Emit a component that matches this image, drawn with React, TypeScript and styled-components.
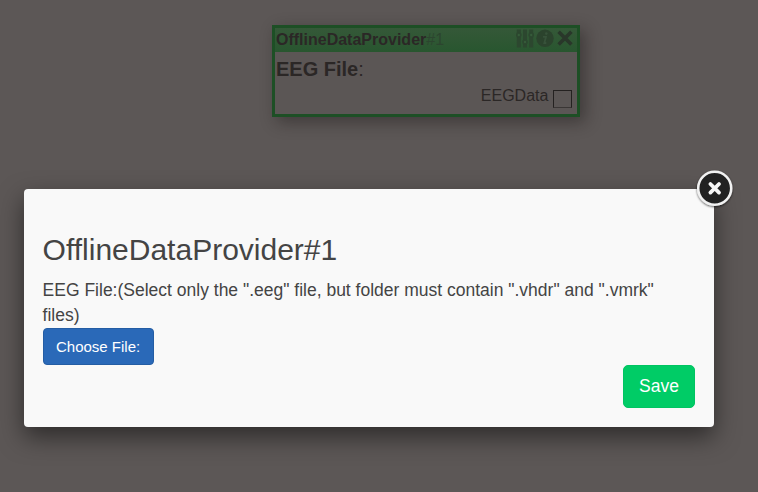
import React from "react";
import styled, { createGlobalStyle } from "styled-components";

const GlobalStyle = createGlobalStyle`
  * { box-sizing: border-box; }
  body {
    margin: 0;
    background: #5c5756;
    font-family: "Liberation Sans", Arial, sans-serif;
    overflow: hidden;
  }
  h2, p { margin: 0; font-weight: 400; }
  button { font-family: inherit; cursor: pointer; }
`;

const Page = styled.main`
  height: 492px;
  padding: 25px 0 0 24px;
  background: #5c5756;
`;

const Node = styled.section`
  width: 308px;
  height: 92px;
  margin-left: 248px;
  border: 3px solid #1d4f25;
  background: #5b5655;
  color: #2b2726;
  box-shadow: 5px 5px 15px rgba(20, 16, 14, 0.4);
`;

const NodeHeader = styled.header`
  display: flex;
  align-items: center;
  height: 24px;
  padding: 0 3px 0 1px;
  background: linear-gradient(#355838, #28562f);
  font-size: 16px;
  line-height: 24px;
`;

const NodeName = styled.span`
  font-weight: 700;
`;

const NodeIndex = styled.span`
  color: #2c452f;
`;

const NodeTools = styled.div`
  display: flex;
  gap: 2px;
  margin: -4px 0 0 auto;
`;

const Field = styled.div`
  padding-left: 1px;
  font-size: 20px;
  line-height: 34px;
`;

const Output = styled.div`
  display: flex;
  justify-content: flex-end;
  gap: 4.6px;
  padding-right: 5px;
  font-size: 16px;
  line-height: 20px;
`;

const Port = styled.span`
  width: 19px;
  height: 18px;
  margin-top: 4px;
  border: 1px solid #242120;
  border-bottom-color: #3a3635;
`;

const Dialog = styled.section`
  position: relative;
  display: flex;
  flex-direction: column;
  width: 690px;
  height: 238px;
  margin-top: 72px;
  padding: 42px 19px 19px 18.6px;
  border-radius: 4px;
  background: #f9f9f9;
  color: #444;
  box-shadow: 0 10px 25px rgba(0, 0, 0, 0.5);
`;

const Title = styled.h2`
  font-size: 30px;
  line-height: 38px;
`;

const Description = styled.p`
  margin-top: 9px;
  font-size: 17.5px;
  line-height: 25px;
`;

const Button = styled.button<{ $primary?: boolean }>`
  align-self: ${({ $primary }) => ($primary ? "flex-end" : "flex-start")};
  width: ${({ $primary }) => ($primary ? 72 : 111)}px;
  height: ${({ $primary }) => ($primary ? 43 : 37)}px;
  padding: 0;
  border: 1px solid ${({ $primary }) => ($primary ? "#00c462" : "#245da4")};
  border-radius: ${({ $primary }) => ($primary ? 5 : 4)}px;
  background: ${({ $primary }) => ($primary ? "#00cc66" : "#2a69b8")};
  color: #fff;
  font-size: ${({ $primary }) => ($primary ? 17.5 : 15)}px;
`;

const CloseButton = styled.button`
  position: absolute;
  top: -20px;
  right: -20px;
  width: 40px;
  height: 40px;
  padding: 0;
  border: 0;
  background: none;

  svg { display: block; }
`;

const SlidersIcon = () => (
  <svg width="18" height="19" viewBox="0 0 18 19">
    <path d="M2.8 0.5V18.5M9 0.5V18.5M15.2 0.5V18.5" stroke="#2c472f" strokeWidth="4" />
    <g fill="#365b3a" stroke="#2c472f" strokeWidth="1.6">
      <circle cx="2.8" cy="6" r="2" />
      <circle cx="9" cy="13" r="2" />
      <circle cx="15.2" cy="6" r="2" />
    </g>
  </svg>
);

const InfoIcon = () => (
  <svg width="18" height="19" viewBox="0 0 18 19">
    <circle cx="9" cy="9.3" r="8.7" fill="#2b432d" />
    <path d="M7 7.8h3L8.3 14h2" fill="none" stroke="#37523a" strokeWidth="1.8" />
    <circle cx="10.3" cy="4.6" r="1.3" fill="#37523a" />
  </svg>
);

const RemoveIcon = () => (
  <svg width="18" height="19" viewBox="0 0 18 19">
    <path d="M2.6 2.8 15.4 15.6M15.4 2.8 2.6 15.6" stroke="#29372a" strokeWidth="3.6" />
  </svg>
);

const CloseIcon = () => (
  <svg width="40" height="40" viewBox="0 0 40 40">
    <defs>
      <filter id="closeShadow" x="-20%" y="-20%" width="140%" height="140%">
        <feDropShadow dx="0" dy="1" stdDeviation="1.2" floodOpacity="0.65" />
      </filter>
    </defs>
    <circle cx="20.7" cy="19.3" r="16.5" fill="#222" stroke="#f2f2f2" strokeWidth="2.5" filter="url(#closeShadow)" />
    <path d="m16.4 15 8.6 8.6m0-8.6-8.6 8.6" stroke="#f7f7f7" strokeWidth="3.8" strokeLinecap="round" />
  </svg>
);

export default function App() {
  return (
    <>
      <GlobalStyle />
      <Page>
        <Node>
          <NodeHeader>
            <NodeName>OfflineDataProvider</NodeName>
            <NodeIndex>#1</NodeIndex>
            <NodeTools>
              <SlidersIcon />
              <InfoIcon />
              <RemoveIcon />
            </NodeTools>
          </NodeHeader>
          <Field><strong>EEG File</strong>:</Field>
          <Output>EEGData<Port /></Output>
        </Node>
        <Dialog role="dialog" aria-labelledby="dialog-title">
          <CloseButton aria-label="Close"><CloseIcon /></CloseButton>
          <Title id="dialog-title">OfflineDataProvider#1</Title>
          <Description>
            EEG File:(Select only the ".eeg" file, but folder must contain ".vhdr" and ".vmrk" files)
          </Description>
          <Button type="button">Choose File:</Button>
          <Button type="button" $primary>Save</Button>
        </Dialog>
      </Page>
    </>
  );
}
